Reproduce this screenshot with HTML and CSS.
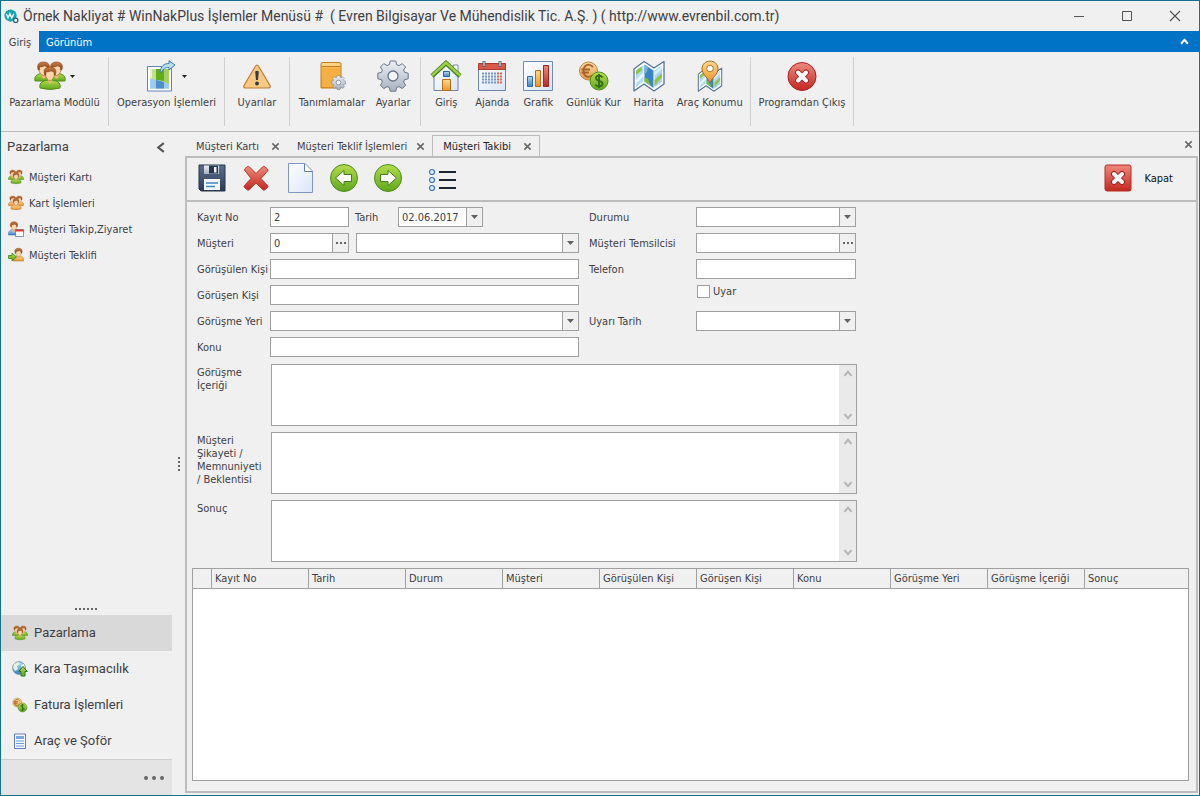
FILE: index.html
```html
<!DOCTYPE html>
<html lang="tr">
<head>
<meta charset="utf-8">
<title>Örnek Nakliyat</title>
<link rel="stylesheet" href="styles.css">
</head>
<body>
<svg class="defs" aria-hidden="true">
  <defs>
    <linearGradient id="gGreen" x1="0" y1="0" x2="0" y2="1"><stop offset="0" stop-color="#b4dc4c"/><stop offset="1" stop-color="#5fa81c"/></linearGradient>
    <linearGradient id="gOrange" x1="0" y1="0" x2="0" y2="1"><stop offset="0" stop-color="#ffd98c"/><stop offset="1" stop-color="#ec952a"/></linearGradient>
    <linearGradient id="gCoin" x1="0" y1="0" x2="0" y2="1"><stop offset="0" stop-color="#fbd9a0"/><stop offset="1" stop-color="#e0a04c"/></linearGradient>
    <linearGradient id="gRed" x1="0" y1="0" x2="0" y2="1"><stop offset="0" stop-color="#f0897c"/><stop offset="1" stop-color="#c3271f"/></linearGradient>
    <linearGradient id="gBlue" x1="0" y1="0" x2="0" y2="1"><stop offset="0" stop-color="#b5dbf7"/><stop offset="1" stop-color="#3c83c9"/></linearGradient>
    <linearGradient id="gPaper" x1="0" y1="0" x2="1" y2="1"><stop offset="0" stop-color="#fff"/><stop offset="1" stop-color="#d8e6f8"/></linearGradient>
    <linearGradient id="gGray" x1="0" y1="0" x2="0" y2="1"><stop offset="0" stop-color="#edf0f5"/><stop offset="1" stop-color="#a7b1c0"/></linearGradient>
    <linearGradient id="gHair" x1="0" y1="0" x2="0" y2="1"><stop offset="0" stop-color="#c87c42"/><stop offset="1" stop-color="#8d4317"/></linearGradient>
    <linearGradient id="gNavy" x1="0" y1="0" x2="0" y2="1"><stop offset="0" stop-color="#5d6f8e"/><stop offset="1" stop-color="#2b3a56"/></linearGradient>
    <g id="head">
      <path d="M-2 4H2V9L0 11L-2 9Z" fill="#eeb57c"/>
      <path d="M-4.500 -2H4.500V2C4 5 2 7.500 0 7.500C-2 7.500-4 5-4.500 2Z" fill="#fad6aa" stroke="#b06a34" stroke-width=".7"/>
      <path d="M-5.300 2C-7-3-5-6 0-6C5-6 7-3 5.300 2L4.200 2L4-1Q2-2 1-2.500Q-1-1-4-1L-4.200 2Z" fill="url(#gHair)" stroke="#8a451c" stroke-width=".6"/>
    </g>
    <symbol id="people" viewBox="0 0 32 32">
      <path d="M1 21C0 16 3 14 8 13.500C13 14 15 16 15 21ZM17 21C17 16 19 14 24 13.500C29 14 32 16 31 21Z" fill="url(#gGreen)" stroke="#558d1c"/>
      <use href="#head" transform="translate(9.500 8)"/><use href="#head" transform="translate(22.500 8)"/>
      <path d="M6 28C5 22 9 20.500 16 20C23 20.500 27 22 26 28Q16 31 6 28Z" fill="url(#gGreen)" stroke="#558d1c"/>
      <use href="#head" transform="translate(16 13)"/>
    </symbol>
    <symbol id="people-orange" viewBox="0 0 32 32">
      <path d="M1 21C0 16 3 14 8 13.500C13 14 15 16 15 21ZM17 21C17 16 19 14 24 13.500C29 14 32 16 31 21Z" fill="url(#gOrange)" stroke="#b8691e"/>
      <use href="#head" transform="translate(9.500 8)"/><use href="#head" transform="translate(22.500 8)"/>
      <path d="M6 28C5 22 9 20.500 16 20C23 20.500 27 22 26 28Q16 31 6 28Z" fill="url(#gOrange)" stroke="#b8691e"/>
      <use href="#head" transform="translate(16 13)"/>
    </symbol>
    <symbol id="visit" viewBox="0 0 32 32">
      <path d="M1 28C0 20 5 17 12 17C19 17 24 20 23 28Z" fill="url(#gBlue)" stroke="#2e68ad"/>
      <path d="M8 17L12 23L16 17Z" fill="#fff"/><use href="#head" transform="translate(12 9) scale(1.25)"/>
      <path d="M15 17H31V31H15Z" fill="#fff" stroke="#5470a8" stroke-width="1.500"/><path d="M15 17H31V21H15Z" fill="#d8382b"/>
    </symbol>
    <symbol id="offer" viewBox="0 0 32 32">
      <path d="M11 28C10 20 14 18 21 18C28 18 32 20 31 28Z" fill="url(#gOrange)" stroke="#b8691e"/>
      <use href="#head" transform="translate(21 10) scale(1.25)"/>
      <path d="M1 17H8V12L17 20L8 28V23H1Z" fill="url(#gGreen)" stroke="#347d18" stroke-width="1.500"/>
    </symbol>
    <symbol id="operation" viewBox="0 0 32 32">
      <path d="M1.500 6.500H25.500V31H1.500Z" fill="#fff" stroke="#6283b7"/>
      <path d="M4 9H23V28.500H4Z" fill="#c3e08e"/><path d="M10 9H18V21L10 20Z" fill="#5fae18"/><path d="M4 9H6V18L4 19Z" fill="#e4f2cd"/><path d="M18 9H23V24L18 22Z" fill="#a4d15c"/><path d="M4 19C10 19 16 21 23 24V28.500H4Z" fill="#9ccbee"/><path d="M10 20L18 22V28.500H10Z" fill="#4d8fc9"/>
      <path d="M14 12C15 6 18 3.500 23 3.500V0.800L29 5L23 10V7.500C19 7.500 17 8.500 16 12Z" fill="#b7ddf5" stroke="#3c7fae"/>
    </symbol>
    <symbol id="warning" viewBox="0 0 32 32">
      <path d="M14.300 6.500Q16 3.500 17.700 6.500L29 25.500Q30 28 27 28H5Q2 28 3 25.500Z" fill="#f8c983" stroke="#c07c35" stroke-width="1.200"/>
      <path d="M14.200 11.500Q16 10 17.800 11.500L17 20H15Z" fill="#333b46"/><circle cx="16" cy="23.500" r="1.900" fill="#333b46"/>
    </symbol>
    <symbol id="gear" viewBox="0 0 32 32">
      <path d="M13.200 1H18.800L19.600 4.600L22 5.600L25.200 3.600L28.600 7L26.600 10L27.600 12.400L31.200 13.200V18.800L27.600 19.600L26.600 22L28.600 25.200L25.200 28.600L22 26.600L19.600 27.600L18.800 31.200H13.200L12.400 27.600L10 26.600L6.800 28.600L3.400 25.200L5.400 22L4.400 19.600L.8 18.800V13.200L4.400 12.400L5.400 10L3.400 7L6.800 3.600L10 5.600L12.400 4.600Z" fill="url(#gGray)" stroke="#687588" stroke-linejoin="round"/>
      <circle cx="16" cy="16" r="5" fill="#f3f4f6" stroke="#687588" stroke-width="1.300"/>
    </symbol>
    <symbol id="define" viewBox="0 0 32 32">
      <path d="M5 4Q5 2.500 7 2.500H23Q25 2.500 25 4V28H5Z" fill="url(#gOrange)" stroke="#c67b16"/><path d="M6 7.500H24V27H6Z" fill="#f5b044"/><path d="M5.500 6.500H24.500" stroke="#c67b16"/>
      <use href="#gear" x="15" y="15" width="15" height="15"/>
    </symbol>
    <symbol id="home" viewBox="0 0 32 32">
      <path d="M23 5H28V16H23Z" fill="#fff" stroke="#7188ae"/><path d="M4 14L16 4L28 14V30.500H4Z" fill="url(#gPaper)" stroke="#6b86b5"/>
      <path d="M12.500 19.500H20.500V30.500H12.500Z" fill="url(#gOrange)" stroke="#b66d1a"/><path d="M13.500 11.500H19.500V16.500H13.500Z" fill="url(#gBlue)" stroke="#2c62a0"/>
      <path d="M2 16L16 3L30 16" fill="none" stroke="#477d1c" stroke-width="4.500"/><path d="M2 15.500L16 2.800L30 15.500" fill="none" stroke="#9ccf47" stroke-width="2.600"/>
    </symbol>
    <symbol id="calendar" viewBox="0 0 32 32">
      <path d="M2.500 4.500H29.500V30.500H2.500Z" fill="url(#gPaper)" stroke="#6c83ae"/><path d="M2.500 3.500H29.500V9.500H2.500Z" fill="#d95846" stroke="#a83a2f"/>
      <path d="M8 1V7M24 1V7" stroke="#5e6674" stroke-width="3"/><path d="M8 1.500V6M24 1.500V6" stroke="#e5e8ee"/>
      <path d="M6 13.500H20M6 16.500H20M6 19.500H20M6 22.500H20" stroke="#7693c5" stroke-width="2" stroke-dasharray="2 1"/><path d="M21 13.500H26M21 16.500H26M21 19.500H26M21 22.500H26" stroke="#df6755" stroke-width="2" stroke-dasharray="2 1"/>
    </symbol>
    <symbol id="chart" viewBox="0 0 32 32">
      <path d="M1.500 1.500H30.500V30.500H1.500Z" fill="url(#gPaper)" stroke="#718ab8"/>
      <path d="M5.500 16.500H10.500V26.500H5.500Z" fill="url(#gBlue)" stroke="#2f68a8"/><path d="M13.500 10.500H18.500V26.500H13.500Z" fill="url(#gOrange)" stroke="#b66d1a"/><path d="M21.500 5.500H26.500V26.500H21.500Z" fill="url(#gRed)" stroke="#992821"/>
    </symbol>
    <symbol id="currency" viewBox="0 0 32 32">
      <circle cx="10.500" cy="11" r="9" fill="url(#gCoin)" stroke="#c08546"/><path d="M15 7C10 2 5.500 6 5.500 11C5.500 16 10 19 15 15M3.500 9.500H12M3.500 12.500H11" fill="none" stroke="#a9622a" stroke-width="1.800"/>
      <circle cx="21" cy="21" r="9" fill="url(#gGreen)" stroke="#4d8f22"/><path d="M24.500 17.500C23 15 17.500 15 18 18.500C18.500 21.500 24.500 20.500 24.500 23.800C24.500 27 18.500 27 17.500 24.500M21 14V28" fill="none" stroke="#356c16" stroke-width="1.900"/>
    </symbol>
    <symbol id="map" viewBox="0 0 32 32">
      <path d="M1 9L11 1.500L21 8L31 1.500V24L21 31L11 24L1 31Z" fill="#fff" stroke="#53729e" stroke-width="1.300" stroke-linejoin="round"/>
      <path d="M3 10.500L10.500 5V21.500L3 27Z" fill="#b5daf3"/><path d="M3 10.500L8.500 6.500L9 10L3 15Z" fill="#8cc63f"/><path d="M3 20L10.500 12V16L3 24Z" fill="#eaf5fd"/>
      <path d="M11.500 4.500L20.500 10.500V28L11.500 21.500Z" fill="#3c83c4"/><path d="M11.500 4.500L15 7L14 12L11.500 14Z" fill="#76b3e0"/><path d="M11.500 17L15 19L18 26L11.500 21.500Z" fill="#7dbb3a"/>
      <path d="M21.500 10.500L29 5.500V22L21.500 27.500Z" fill="#a9d3f0"/><path d="M21.500 20L29 13V17L21.500 26Z" fill="#8cc63f"/><path d="M21.500 12L29 6V9L21.500 16Z" fill="#d7ecfa"/>
    </symbol>
    <symbol id="location" viewBox="0 0 32 32">
      <use href="#map" x="3" y="7" width="26" height="25"/>
      <path d="M16 22.500C13.500 17.500 8 14 8 9C8-1.500 24-1.500 24 9C24 14 18.500 17.500 16 22.500Z" fill="url(#gOrange)" stroke="#a86b20"/><circle cx="16" cy="8.500" r="3.300" fill="#fff" stroke="#aa7b3b"/>
    </symbol>
    <symbol id="exit" viewBox="0 0 32 32">
      <circle cx="16" cy="16.500" r="14" fill="url(#gRed)" stroke="#a32720"/><path d="M12 12.500L20 20.500M20 12.500L12 20.500" stroke="#a32720" stroke-width="6" stroke-linecap="round"/><path d="M12 12.500L20 20.500M20 12.500L12 20.500" stroke="#fff" stroke-width="4" stroke-linecap="round"/>
    </symbol>
    <symbol id="close-red" viewBox="0 0 28 28">
      <rect x="1" y="1" width="26" height="26" rx="2" fill="url(#gRed)" stroke="#b52c24"/><path d="M10 10L18 18M18 10L10 18" stroke="#98231c" stroke-width="6" stroke-linecap="round"/><path d="M10 10L18 18M18 10L10 18" stroke="#f8f5fa" stroke-width="4" stroke-linecap="round"/>
    </symbol>
    <symbol id="save" viewBox="0 0 32 32">
      <path d="M3 3H29V29H5L3 27Z" fill="url(#gNavy)" stroke="#26344d"/><path d="M8 3.500H23V12H8Z" fill="url(#gGray)"/><path d="M13 3.500H22V11.500H13Z" fill="#273750"/><path d="M18 5H20.500V10.500H18Z" fill="#eef2f7"/>
      <path d="M8 17H24V28H8Z" fill="#f4f8fd"/><path d="M10 21H22M10 24.500H19" stroke="#3f86c9" stroke-width="1.300"/>
    </symbol>
    <symbol id="delete" viewBox="0 0 32 32"><path d="M4.500 8Q4 7 7.500 4.500Q8.500 4 9.500 5L16 11.500L22.500 5Q23.500 4 24.500 4.500L27.500 7Q28.500 8 27.500 9L21 16.500L27.500 23.500Q28.500 24.500 27.500 25.500L24.500 28Q23.500 28.500 22.500 27.500L16 21L9.500 27.500Q8.500 28.500 7.500 28L4.500 25.500Q3.500 24.500 4.500 23.500L11 16.500Z" fill="url(#gRed)" stroke="#b9382f"/></symbol>
    <symbol id="new" viewBox="0 0 32 32"><path d="M4.500 1.500H21L28.500 9V30.500H4.500Z" fill="url(#gPaper)" stroke="#7e97c4"/><path d="M20.500 2V9.500H28" fill="#fff" stroke="#637cab"/></symbol>
    <symbol id="prev" viewBox="0 0 32 32"><circle cx="16" cy="16" r="13.500" fill="url(#gGreen)" stroke="#4d8d20"/><path d="M7.500 16L16 8.500V12.500H23.500V19.500H16V23.500Z" fill="#fff" stroke="#457b21"/></symbol>
    <symbol id="next" viewBox="0 0 32 32"><circle cx="16" cy="16" r="13.500" fill="url(#gGreen)" stroke="#4d8d20"/><path d="M24.500 16L16 8.500V12.500H8.500V19.500H16V23.500Z" fill="#fff" stroke="#457b21"/></symbol>
    <symbol id="list" viewBox="0 0 32 32"><path d="M13 10H30M13 18H30M13 26H30" stroke="#1d2636" stroke-width="2"/><g fill="#d6eafa" stroke="#3e78b8" stroke-width="1.200"><circle cx="6" cy="10" r="2.500"/><circle cx="6" cy="18" r="2.500"/><circle cx="6" cy="26" r="2.500"/></g></symbol>
    <symbol id="globe" viewBox="0 0 16 16"><circle cx="7" cy="7" r="6.300" fill="url(#gBlue)" stroke="#557c9d" stroke-width=".8"/><path d="M2 3L6 1L8 3L5 5L6 8L3 10L1 7ZM9 4L12 3L13 7L10 8Z" fill="#e8f2e0"/><path d="M11 5.500L15.300 10.500H13V15H9V10.500H6.700Z" fill="url(#gGreen)" stroke="#2f7218"/></symbol>
    <symbol id="doc" viewBox="0 0 16 16"><path d="M2.500 1H13.500V15.500H2.500Z" fill="#f4f9ff" stroke="#6680b4"/><path d="M4 3H12V6H4Z" fill="#78a8dc"/><path d="M4 8H12M4 10.500H12M4 13H12" stroke="#719cce"/></symbol>
    <symbol id="cross" viewBox="0 0 10 10"><path d="M1.500 1.500L8.500 8.500M8.500 1.500L1.500 8.500" stroke="#666" stroke-width="1.700"/></symbol>
    <symbol id="arrow" viewBox="0 0 7 4"><path d="M0 0H7L3.500 4Z" fill="currentColor"/></symbol>
    <symbol id="dots" viewBox="0 0 12 4"><path d="M1 1H3V3H1ZM5 1H7V3H5ZM9 1H11V3H9Z" fill="#666"/></symbol>
    <symbol id="up" viewBox="0 0 8 6"><path d="M1 5L4 1.500L7 5" fill="none" stroke="currentColor" stroke-width="1.800"/></symbol>
    <symbol id="down" viewBox="0 0 8 6"><path d="M1 1L4 4.500L7 1" fill="none" stroke="currentColor" stroke-width="1.800"/></symbol>
  </defs>
</svg>
<div class="window">
  <header class="titlebar">
    <svg class="app-icon" viewBox="0 0 16 16"><circle cx="7" cy="7" r="6.500" fill="#12a5b2"/><path d="M2.500 5L4.300 9.500L6.300 5L8.300 9.500L10.500 5" fill="none" stroke="#fff" stroke-width="1.400"/><circle cx="12.500" cy="12" r="2.300" fill="#fff" stroke="#286074" stroke-width="1.400"/></svg>
    <h1 class="title">Örnek Nakliyat # WinNakPlus İşlemler Menüsü # &nbsp;( Evren Bilgisayar Ve Mühendislik Tic. A.Ş. ) ( http://www.evrenbil.com.tr)</h1>
    <button class="win-btn" aria-label="Simge durumuna küçült"><svg viewBox="0 0 12 12"><path d="M1 6.500H11" stroke="#555"/></svg></button>
    <button class="win-btn" aria-label="Ekranı kapla"><svg viewBox="0 0 12 12"><path d="M1.500 1.500H10.500V10.500H1.500Z" fill="none" stroke="#555"/></svg></button>
    <button class="win-btn" aria-label="Pencereyi kapat"><svg viewBox="0 0 12 12"><path d="M1 1L11 11M11 1L1 11" stroke="#555" stroke-width="1.200"/></svg></button>
  </header>
  <nav class="ribbon-tabs">
    <button class="ribbon-tab ribbon-tab-active">Giriş</button>
    <button class="ribbon-tab">Görünüm</button>
    <button class="collapse" aria-label="Şeridi daralt"><svg viewBox="0 0 8 6"><use href="#up"/></svg></button>
  </nav>
  <div class="ribbon">
    <div class="group"><button class="tool"><span class="tool-icon"><svg><use href="#people"/></svg><svg class="caret"><use href="#arrow"/></svg></span>Pazarlama Modülü</button></div>
    <div class="group group-wide"><button class="tool"><span class="tool-icon"><svg><use href="#operation"/></svg><svg class="caret"><use href="#arrow"/></svg></span>Operasyon İşlemleri</button></div>
    <div class="group group-narrow"><button class="tool"><span class="tool-icon"><svg><use href="#warning"/></svg></span>Uyarılar</button></div>
    <div class="group group-settings"><button class="tool"><span class="tool-icon"><svg><use href="#define"/></svg></span>Tanımlamalar</button><button class="tool"><span class="tool-icon"><svg><use href="#gear"/></svg></span>Ayarlar</button></div>
    <div class="group group-main"><button class="tool"><span class="tool-icon"><svg><use href="#home"/></svg></span>Giriş</button><button class="tool"><span class="tool-icon"><svg><use href="#calendar"/></svg></span>Ajanda</button><button class="tool"><span class="tool-icon"><svg><use href="#chart"/></svg></span>Grafik</button><button class="tool"><span class="tool-icon"><svg><use href="#currency"/></svg></span>Günlük Kur</button><button class="tool"><span class="tool-icon"><svg><use href="#map"/></svg></span>Harita</button><button class="tool"><span class="tool-icon"><svg><use href="#location"/></svg></span>Araç Konumu</button></div>
    <div class="group group-exit"><button class="tool"><span class="tool-icon"><svg><use href="#exit"/></svg></span>Programdan Çıkış</button></div>
  </div>
  <div class="workspace">
    <aside class="sidebar">
      <div class="side-head"><h2 class="side-title">Pazarlama</h2><button class="side-collapse" aria-label="Paneli daralt"><svg viewBox="0 0 8 10"><path d="M7 1L2 5L7 9" fill="none" stroke="#555" stroke-width="2"/></svg></button></div>
      <nav class="side-links">
        <a class="side-link" href="#"><svg><use href="#people"/></svg>Müşteri Kartı</a>
        <a class="side-link" href="#"><svg><use href="#people-orange"/></svg>Kart İşlemleri</a>
        <a class="side-link" href="#"><svg><use href="#visit"/></svg>Müşteri Takip,Ziyaret</a>
        <a class="side-link" href="#"><svg><use href="#offer"/></svg>Müşteri Teklifi</a>
      </nav>
      <div class="grip" aria-hidden="true"></div>
      <nav class="modules">
        <button class="module module-active"><svg><use href="#people"/></svg>Pazarlama</button>
        <button class="module"><svg><use href="#globe"/></svg>Kara Taşımacılık</button>
        <button class="module"><svg><use href="#currency"/></svg>Fatura İşlemleri</button>
        <button class="module"><svg><use href="#doc"/></svg>Araç ve Şoför</button>
      </nav>
      <div class="side-foot"><button class="more" aria-label="Diğer"><svg viewBox="0 0 20 4"><circle cx="2" cy="2" r="2"/><circle cx="10" cy="2" r="2"/><circle cx="18" cy="2" r="2"/></svg></button></div>
    </aside>
    <div class="splitter"><span class="splitter-grip"></span></div>
    <main class="content">
      <div class="doc-tabs">
        <div class="doc-tab"><button class="doc-name">Müşteri Kartı</button><button class="doc-close" aria-label="Kapat"><svg><use href="#cross"/></svg></button></div>
        <div class="doc-tab"><button class="doc-name">Müşteri Teklif İşlemleri</button><button class="doc-close" aria-label="Kapat"><svg><use href="#cross"/></svg></button></div>
        <div class="doc-tab doc-tab-active"><button class="doc-name">Müşteri Takibi</button><button class="doc-close" aria-label="Kapat"><svg><use href="#cross"/></svg></button></div>
        <button class="doc-close close-all" aria-label="Sekmeyi kapat"><svg><use href="#cross"/></svg></button>
      </div>
      <section class="panel">
        <div class="toolbar">
          <button class="action" aria-label="Kaydet"><svg><use href="#save"/></svg></button>
          <button class="action" aria-label="Sil"><svg><use href="#delete"/></svg></button>
          <button class="action" aria-label="Yeni"><svg><use href="#new"/></svg></button>
          <button class="action" aria-label="Önceki"><svg><use href="#prev"/></svg></button>
          <button class="action" aria-label="Sonraki"><svg><use href="#next"/></svg></button>
          <button class="action action-list" aria-label="Liste"><svg><use href="#list"/></svg></button>
          <button class="close-form"><svg><use href="#close-red"/></svg>Kapat</button>
        </div>
        <form class="form">
          <div class="fields">
            <div class="column">
              <div class="row"><label for="no">Kayıt No</label><div class="field field-no"><input id="no" value="2"></div><label class="label-date" for="date">Tarih</label><div class="field field-date"><input id="date" value="02.06.2017"><button type="button" class="field-btn" aria-label="Takvim"><svg class="arrow"><use href="#arrow"/></svg></button></div></div>
              <div class="row"><label for="cust">Müşteri</label><div class="field field-no"><input id="cust" value="0"><button type="button" class="field-btn" aria-label="Müşteri seç"><svg class="dots"><use href="#dots"/></svg></button></div><div class="field field-fill"><select aria-label="Müşteri adı"><option></option></select><span class="field-btn overlay"><svg class="arrow"><use href="#arrow"/></svg></span></div></div>
              <div class="row"><label for="met">Görüşülen Kişi</label><div class="field field-fill"><input id="met"></div></div>
              <div class="row"><label for="by">Görüşen Kişi</label><div class="field field-fill"><input id="by"></div></div>
              <div class="row"><label for="place">Görüşme Yeri</label><div class="field field-fill"><select id="place"><option></option></select><span class="field-btn overlay"><svg class="arrow"><use href="#arrow"/></svg></span></div></div>
              <div class="row"><label for="topic">Konu</label><div class="field field-fill"><input id="topic"></div></div>
            </div>
            <div class="column column-right">
              <div class="row"><label for="status">Durumu</label><div class="field field-fill"><select id="status"><option></option></select><span class="field-btn overlay"><svg class="arrow"><use href="#arrow"/></svg></span></div></div>
              <div class="row"><label for="rep">Müşteri Temsilcisi</label><div class="field field-fill"><input id="rep"><button type="button" class="field-btn" aria-label="Temsilci seç"><svg class="dots"><use href="#dots"/></svg></button></div></div>
              <div class="row"><label for="phone">Telefon</label><div class="field field-fill"><input id="phone"></div></div>
              <div class="row row-check"><input type="checkbox" class="check" id="warn"><label class="check-label" for="warn">Uyar</label></div>
              <div class="row"><label for="warndate">Uyarı Tarih</label><div class="field field-fill"><input id="warndate"><button type="button" class="field-btn" aria-label="Takvim"><svg class="arrow"><use href="#arrow"/></svg></button></div></div>
            </div>
          </div>
          <div class="note"><label for="n1">Görüşme İçeriği</label><div class="area"><textarea id="n1"></textarea><span class="scroll"><svg><use href="#up"/></svg><svg><use href="#down"/></svg></span></div></div>
          <div class="note"><label for="n2">Müşteri Şikayeti / Memnuniyeti / Beklentisi</label><div class="area"><textarea id="n2"></textarea><span class="scroll"><svg><use href="#up"/></svg><svg><use href="#down"/></svg></span></div></div>
          <div class="note"><label for="n3">Sonuç</label><div class="area"><textarea id="n3"></textarea><span class="scroll"><svg><use href="#up"/></svg><svg><use href="#down"/></svg></span></div></div>
        </form>
        <div class="records">
          <table class="table">
            <colgroup><col class="col-mark"><col class="col"><col class="col"><col class="col"><col class="col"><col class="col"><col class="col"><col class="col"><col class="col"><col class="col"><col></colgroup>
            <thead><tr><th></th><th>Kayıt No</th><th>Tarih</th><th>Durum</th><th>Müşteri</th><th>Görüşülen Kişi</th><th>Görüşen Kişi</th><th>Konu</th><th>Görüşme Yeri</th><th>Görüşme İçeriği</th><th>Sonuç</th></tr></thead>
          </table>
        </div>
      </section>
    </main>
  </div>
</div>
</body>
</html>
```

FILE: styles.css
```css
* { box-sizing: border-box; }
body { margin: 0; background: #f0f0f0; color: #404044; font: 11px/13px "DejaVu Sans Condensed", "DejaVu Sans", sans-serif; }
button, input, select, textarea { font: inherit; color: inherit; margin: 0; padding: 0; border: 0; background: none; border-radius: 0; }
svg { display: block; flex: none; }
.defs { position: absolute; width: 0; height: 0; }
.window { display: flex; flex-direction: column; min-height: 100vh; border: 1px solid #17708f; }

.titlebar { display: flex; align-items: center; height: 30px; padding-left: 3px; }
.app-icon { width: 15px; height: 15px; }
.title { flex: 1; min-width: 0; margin: 0 0 0 4px; font-family: Roboto, sans-serif; font-size: 14px; line-height: 20px; font-weight: 400; white-space: nowrap; }
.win-btn { display: grid; place-items: center; width: 48px; height: 30px; }
.win-btn svg { width: 12px; height: 12px; }

.ribbon-tabs { display: flex; height: 21px; background: #0173c7; color: #fff; }
.ribbon-tab { padding: 2px 7px 0; }
.ribbon-tab-active { width: 38px; background: #f0f0f0; color: #404044; }
.collapse { margin-left: auto; padding: 0 10px; }
.collapse svg { width: 9px; height: 7px; }

.ribbon { display: flex; height: 80px; padding: 5px 0; border-bottom: 1px solid #bdbdbd; }
.group { display: flex; justify-content: center; min-width: 108px; padding: 0 2px; border-right: 1px solid #cfcfcf; }
.group-wide { min-width: 116px; }
.group-narrow { min-width: 65px; }
.group-settings { min-width: 131px; }
.group-main { min-width: 330px; }
.group-exit { min-width: 103px; }
.tool { display: flex; flex-direction: column; align-items: center; gap: 4px; min-width: 46px; padding: 3px 5px 0; white-space: nowrap; }
.tool-icon { display: flex; align-items: center; gap: 4px; }
.tool-icon svg { width: 32px; height: 32px; }
.tool-icon .caret { width: 5px; height: 3px; color: #222; }

.workspace { display: flex; flex: 1; }
.sidebar { display: flex; flex-direction: column; width: 171px; }
.side-head { display: flex; align-items: center; justify-content: space-between; height: 32px; padding: 0 7px 2px 6px; }
.side-title { margin: 0; font-family: Roboto, sans-serif; font-size: 13px; line-height: 18px; font-weight: 400; }
.side-collapse svg { width: 9px; height: 11px; }
.side-links { flex: 1; }
.side-link { display: flex; align-items: center; gap: 5px; height: 26px; padding-left: 7px; color: inherit; text-decoration: none; }
.side-link svg, .module svg { width: 16px; height: 16px; }
.grip { align-self: center; width: 23px; height: 2px; margin-bottom: 5px; background: repeating-linear-gradient(90deg, #666 0 2px, transparent 2px 4px); }
.module { display: flex; align-items: center; gap: 6px; width: 100%; height: 36px; padding-left: 11px; font-family: Roboto, sans-serif; font-size: 13px; line-height: 18px; }
.module-active { background: #d9d9d9; }
.side-foot { display: flex; align-items: center; justify-content: flex-end; height: 36px; padding-right: 8px; border-top: 1px solid #cfcfcf; background: #e4e4e4; }
.more svg { width: 20px; height: 4px; fill: #666; }
.splitter { display: grid; place-items: center; width: 13px; }
.splitter-grip { width: 2px; height: 14px; background: repeating-linear-gradient(#666 0 2px, transparent 2px 4px); }

.content { display: flex; flex-direction: column; flex: 1; min-width: 0; padding: 0 1px 2px 0; }
.doc-tabs { display: flex; align-items: flex-end; height: 24px; padding-left: 1px; }
.doc-tab { display: flex; align-items: center; justify-content: space-between; gap: 9px; min-width: 101px; height: 20px; padding: 0 7px 0 10px; }
.doc-tab-active { min-width: 108px; height: 22px; margin-bottom: -1px; border: 1px solid #bdbdbd; border-bottom: 0; background: #f0f0f0; color: #222; }
.doc-name { white-space: nowrap; }
.doc-close svg { width: 9px; height: 9px; }
.close-all { align-self: center; margin-left: auto; padding-right: 5px; }
.panel { display: flex; flex-direction: column; flex: 1; border: 2px solid #bdbdbd; }
.toolbar { display: flex; align-items: center; gap: 12px; height: 44px; padding: 0 23px 2px 9px; border-bottom: 2px solid #bdbdbd; }
.action svg { width: 32px; height: 32px; }
.action-list { margin-left: 10px; }
.close-form { display: flex; align-items: center; gap: 12px; margin-left: auto; color: #111; }
.close-form svg { width: 28px; height: 28px; }

.form { padding: 5px 10px 6px; }
.fields { display: flex; gap: 10px; margin-bottom: 7px; }
.column { display: flex; flex-direction: column; gap: 6px; width: 382px; }
.column-right { width: 267px; }
.row { display: flex; align-items: center; height: 20px; }
.row label { width: 73px; white-space: nowrap; }
.column-right .row label { width: 107px; }
.row .label-date { width: 49px; padding-left: 6px; }
.field { position: relative; display: flex; height: 20px; border: 1px solid #a0a0a0; background: #fff; }
.field input, .field select { flex: 1; width: 0; min-width: 0; padding-left: 3px; appearance: none; }
.field-no { width: 79px; }
.field-date { width: 85px; }
.field-fill { flex: 1; }
.field-no + .field-fill { margin-left: 7px; }
.field-btn { display: grid; place-items: center; width: 16px; border-left: 1px solid #a0a0a0; background: #f0f0f0; }
.overlay { position: absolute; top: 0; right: 0; bottom: 0; pointer-events: none; }
.arrow { width: 7px; height: 4px; color: #606060; }
.dots { width: 12px; height: 4px; }
.row-check { align-items: flex-start; padding-left: 108px; }
.check { width: 13px; height: 13px; border: 1px solid #a0a0a0; background: #fff; appearance: none; }
.check:checked { background: #0173c7; }
.column-right .row .check-label { width: auto; margin-left: 3px; }
.note { display: flex; width: 660px; margin-top: 6px; }
.fields + .note { margin-top: 0; }
.note label { width: 74px; padding: 2px 9px 0 0; }
.area { display: flex; flex: 1; height: 62px; border: 1px solid #a0a0a0; background: #fff; }
.area textarea { flex: 1; resize: none; padding: 4px; }
.scroll { display: flex; flex-direction: column; justify-content: space-between; align-items: center; width: 17px; padding: 5px 0; background: #eaeaea; color: #b5b5b5; }
.scroll svg { width: 10px; height: 7px; }

.records { flex: 1; margin: 0 7px 10px 5px; border: 1px solid #a0a0a0; background: #fff; }
.table { width: 100%; border-collapse: separate; border-spacing: 0; table-layout: fixed; }
.table th { height: 20px; padding: 0 3px; border-right: 1px solid #a0a0a0; border-bottom: 1px solid #a0a0a0; background: #f0f0f0; font-weight: 400; text-align: left; white-space: nowrap; }
.table th:last-child { border-right: 0; }
.col-mark { width: 19px; }
.col { width: 97px; }
```
